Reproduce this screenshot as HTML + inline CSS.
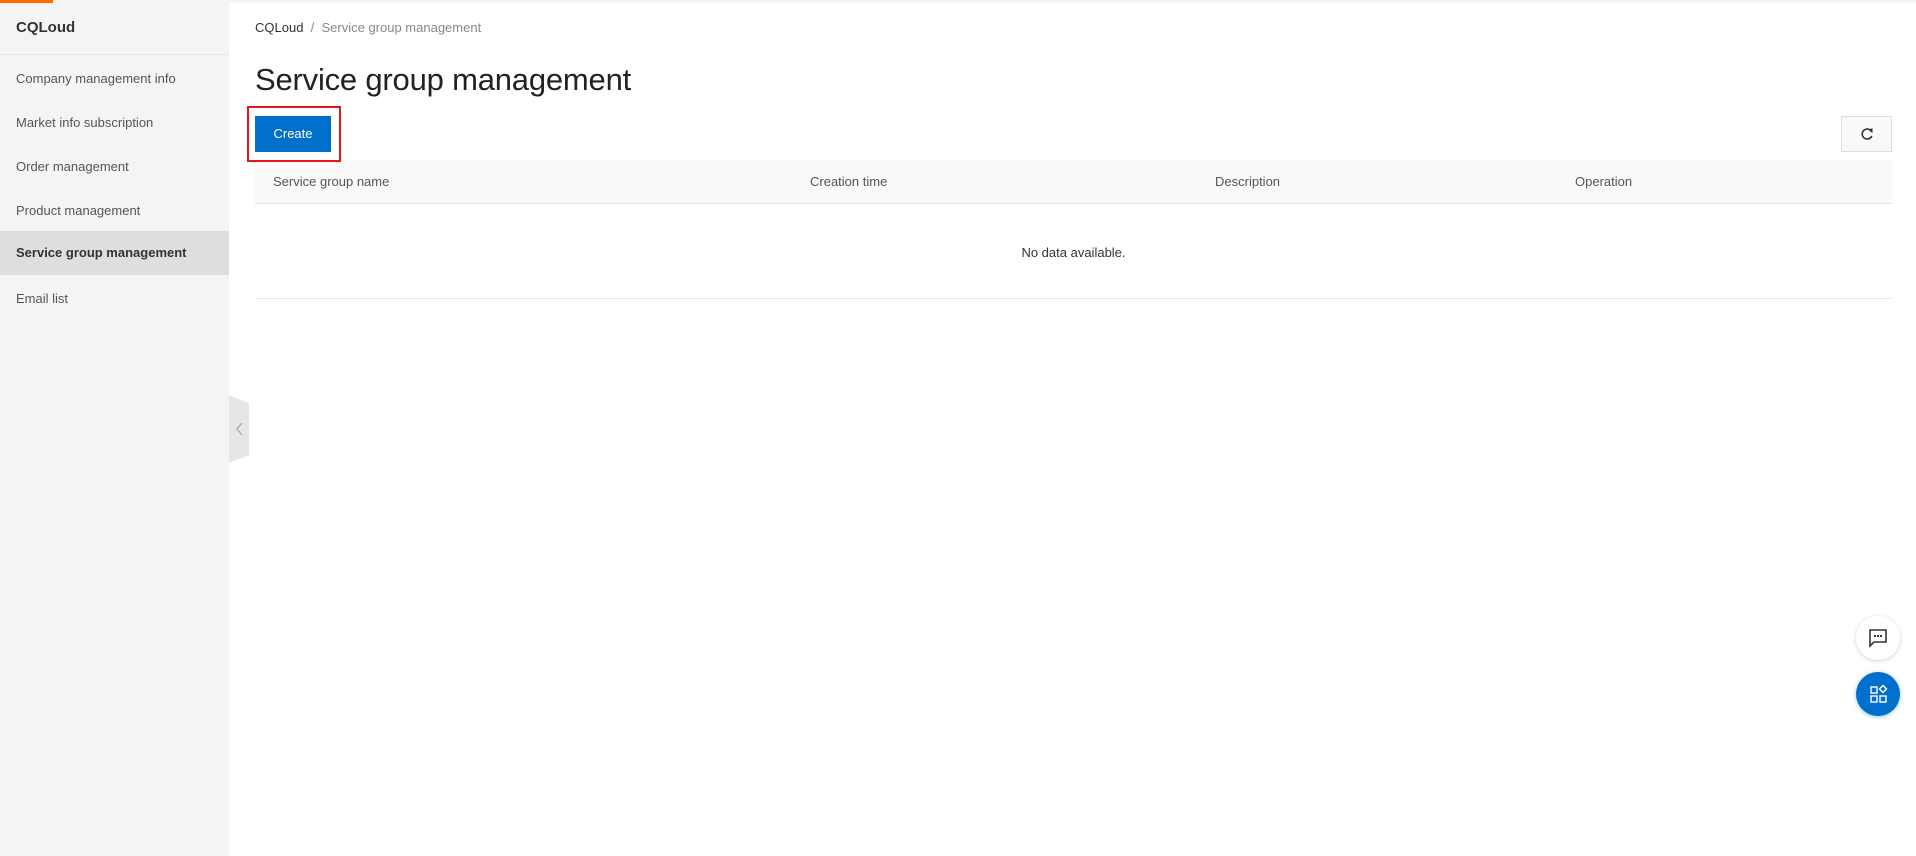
<!DOCTYPE html>
<html><head><style>
*{margin:0;padding:0;box-sizing:border-box}
body{width:1916px;height:856px;position:relative;background:#fff;font-family:"Segoe UI","Liberation Sans",sans-serif;color:#333;overflow:hidden}
.side{position:absolute;left:0;top:0;width:229px;height:856px;background:#f4f4f4}
.orange{position:absolute;left:0;top:0;width:53px;height:3px;background:#ff6a00}
.topline{position:absolute;left:229px;top:0;right:0;height:4px;background:linear-gradient(#eee,#fff)}
.brand{position:absolute;left:16px;top:19px;font-size:15px;font-weight:bold;color:#333}
.div{position:absolute;left:0;top:54px;width:229px;height:1px;background:#e6e6e6}
.item{position:absolute;left:0;width:229px;height:44px;line-height:44px;padding-left:16px;font-size:13px;color:#555}
.item.act{background:#dedede;font-weight:bold;color:#333}
.bc{position:absolute;left:255px;top:20px;font-size:13px;color:#888}
.bc b{font-weight:normal;color:#333}
h1{position:absolute;left:255px;top:62px;font-size:31px;font-weight:normal;color:#222;letter-spacing:-0.2px}
.red{position:absolute;left:247px;top:106px;width:94px;height:56px;border:2px solid #e8141c;z-index:5}
.btn{position:absolute;left:255px;top:116px;width:76px;height:36px;background:#0070cc;color:#fff;font-size:13px;text-align:center;line-height:36px}
.ref{position:absolute;left:1841px;top:116px;width:51px;height:36px;border:1px solid #ddd;background:#f9f9f9}
.th{position:absolute;left:255px;top:160px;width:1637px;height:44px;background:#f9f9f9;border-bottom:1px solid #e6e6e6}
.th span{position:absolute;top:0;line-height:44px;font-size:13px;color:#555}
.nd{position:absolute;left:255px;top:204px;width:1637px;height:95px;border-bottom:1px solid #e6e6e6;text-align:center;line-height:98px;font-size:13px;color:#333}
.tab{position:absolute;left:229px;top:395px}
.fab{position:absolute;width:44px;height:44px;border-radius:50%}
</style></head><body>
<div class="side"></div>
<div class="orange"></div>
<div class="topline"></div>
<div class="brand">CQLoud</div>
<div class="div"></div>
<div class="item" style="top:57px">Company management info</div>
<div class="item" style="top:101px">Market info subscription</div>
<div class="item" style="top:145px">Order management</div>
<div class="item" style="top:189px">Product management</div>
<div class="item act" style="top:231px">Service group management</div>
<div class="item" style="top:277px">Email list</div>
<svg class="tab" width="21" height="68"><polygon points="0,0 20,8 20,60 0,68" fill="#e6e6e6"/><polyline points="13,28 8,34 13,40" fill="none" stroke="#aaa" stroke-width="1.3"/></svg>
<div class="bc"><b>CQLoud</b> &nbsp;/&nbsp; Service group management</div>
<h1>Service group management</h1>
<div class="btn">Create</div>
<div class="ref"><svg width="49" height="34"><path d="M29.5 14.5 A5 5 0 1 0 29.8 19" fill="none" stroke="#333" stroke-width="1.6"/><polygon points="26.5,13 30.5,11 30.5,16" fill="#333"/></svg></div>
<div class="th"><span style="left:18px">Service group name</span><span style="left:555px">Creation time</span><span style="left:960px">Description</span><span style="left:1320px">Operation</span></div>
<div class="red"></div>
<div class="nd">No data available.</div>
<div class="fab" style="left:1856px;top:616px;background:#fff;box-shadow:0 1px 5px rgba(0,0,0,.18)"><svg width="44" height="44"><path d="M14 14h16v12h-12l-4 4z" fill="none" stroke="#333" stroke-width="1.6"/><rect x="18" y="19" width="2" height="2" fill="#333"/><rect x="21" y="19" width="2" height="2" fill="#333"/><rect x="24" y="19" width="2" height="2" fill="#333"/></svg></div>
<div class="fab" style="left:1856px;top:672px;background:#0070cc;box-shadow:0 1px 5px rgba(0,112,204,.4)"><svg width="44" height="44" fill="none" stroke="#fff" stroke-width="1.4"><rect x="15" y="15" width="6" height="6"/><rect x="15" y="24" width="6" height="6"/><rect x="24" y="24" width="6" height="6"/><path d="M27 13.5l3.5 3.5-3.5 3.5-3.5-3.5z"/></svg></div>
</body></html>
